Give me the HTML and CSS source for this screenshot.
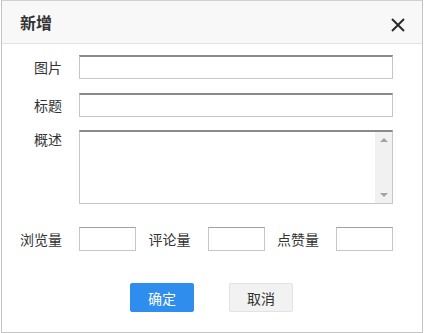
FILE: index.html
```html
<!DOCTYPE html>
<html lang="zh-CN">
<head>
    <meta charset="UTF-8">
    <title>新增</title>
    <link rel="stylesheet" href="styles.css">
</head>
<body>
<div class="dialog">
    <div class="dialog-head">
        <h3>新增</h3>
        <span class="close">
            <svg width="16" height="16" viewBox="0 0 16 16"><path d="M2 2L14 14M14 2L2 14" stroke="#2b2b2b" stroke-width="2" fill="none"/></svg>
        </span>
    </div>
    <form class="dialog-body">
        <div class="row">
            <label>图片</label>
            <input type="text" class="field">
        </div>
        <div class="row">
            <label>标题</label>
            <input type="text" class="field">
        </div>
        <div class="row row-top">
            <label>概述</label>
            <div class="field area">
                <textarea></textarea>
                <div class="scrollbar">
                    <span class="arrow arrow-up"></span>
                    <span class="arrow arrow-down"></span>
                </div>
            </div>
        </div>
        <div class="stats">
            <div class="stat"><label>浏览量</label><input type="text" class="field small"></div>
            <div class="stat"><label>评论量</label><input type="text" class="field small"></div>
            <div class="stat"><label>点赞量</label><input type="text" class="field small"></div>
        </div>
        <div class="actions">
            <button type="button" class="btn btn-primary">确定</button>
            <button type="button" class="btn">取消</button>
        </div>
    </form>
</div>
</body>
</html>
```

FILE: styles.css
```css
html * {
    box-sizing: border-box;
    outline: none;
}

body {
    margin: 0;
    color: #333;
    font-family: "Noto Sans CJK SC", "Noto Sans", sans-serif;
    font-size: 14px;
}

.dialog {
    width: 422px;
    height: 333px;
    margin-left: 1px;
    border: 1px solid #c4c4c4;
    border-top-color: #d0d0d0;
    background: #fff;
}

.dialog-head {
    display: flex;
    align-items: center;
    justify-content: space-between;
    height: 43px;
    padding: 0 16px 0 18px;
    background: #f8f8f8;
    border-bottom: 1px solid #e3e3e3;
}

.dialog-head h3 {
    margin: 0;
    font-size: 16px;
    font-weight: 700;
    color: #333;
}

.close {
    display: flex;
    margin-top: 5px;
}

.dialog-body {
    padding: 11px 29px 0 18px;
}

.row {
    display: flex;
    align-items: center;
    margin-bottom: 14px;
}

.row + .row-top {
    margin-top: -1px;
}

.row-top {
    align-items: flex-start;
}

.row label {
    width: 42px;
    margin-right: 17px;
    text-align: right;
    line-height: 18px;
}

.field {
    flex: 1;
    height: 24px;
    margin: 0;
    border: 1px solid #c6c6c6;
    border-top: 2px solid #8a8a8a;
    background: #fff;
    font: inherit;
}

.area {
    display: flex;
    height: 74px;
}

.area textarea {
    flex: 1;
    border: 0;
    resize: none;
    font: inherit;
}

.scrollbar {
    display: flex;
    flex-direction: column;
    align-items: center;
    justify-content: space-between;
    width: 17px;
    padding: 6px 0 6px;
    background: #f1f1f1;
}

.arrow {
    width: 0;
    height: 0;
    border-left: 4px solid transparent;
    border-right: 4px solid transparent;
}

.arrow-up {
    border-bottom: 4px solid #a3a3a3;
}

.arrow-down {
    border-top: 4px solid #a3a3a3;
}

.stats {
    display: flex;
    justify-content: space-between;
    margin-top: 23px;
}

.stat {
    display: flex;
    align-items: center;
}

.stat label {
    margin-right: 17px;
}

.small {
    flex: none;
    width: 57px;
    border-top: 1px solid #a0a0a0;
}

.actions {
    display: flex;
    justify-content: center;
    gap: 35px;
    margin-top: 32px;
    padding-left: 10px;
}

.btn {
    width: 64px;
    height: 29px;
    border: 1px solid #e2e2e2;
    border-radius: 2px;
    background: #f2f2f2;
    color: #333;
    font: inherit;
    cursor: pointer;
}

.btn-primary {
    border-color: #2e8ded;
    background: #2e8ded;
    color: #fff;
}
```
